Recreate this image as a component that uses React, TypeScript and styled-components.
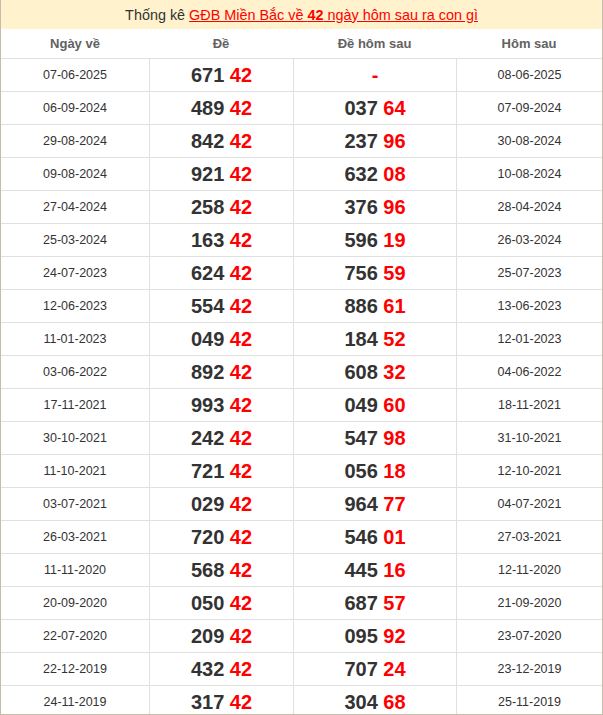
import styled, { createGlobalStyle } from "styled-components";

const GlobalStyle = createGlobalStyle`
  html, body {
    margin: 0;
    padding: 0;
    background: #fff;
  }
  body {
    font-family: "Liberation Sans", Arial, sans-serif;
  }
`;

const Frame = styled.div`
  width: 603px;
  height: 715px;
  box-sizing: border-box;
  border: 1px solid #c7bbab;
  border-top: none;
  overflow: hidden;
  background: #fff;
`;

const Title = styled.div`
  height: 29px;
  background: #fff2cc;
  display: flex;
  align-items: center;
  justify-content: center;
  font-size: 14.4px;
  color: #333;
`;

const TitleLink = styled.a`
  color: #f00;
  text-decoration: underline;
  margin-left: 4px;

  b {
    font-weight: 700;
  }
`;

const Row = styled.div<{ head?: boolean }>`
  display: grid;
  grid-template-columns: 148px 144px 163px 1fr;
  height: ${({ head }) => (head ? "29px" : "32px")};
  border-bottom: 1px solid #e0e0e0;
`;

const Cell = styled.div<{ head?: boolean }>`
  display: flex;
  align-items: center;
  justify-content: center;
  border-left: ${({ head }) => (head ? "none" : "1px solid #e0e0e0")};

  &:first-child {
    border-left: none;
  }
`;

const HeadText = styled.span`
  font-size: 13px;
  font-weight: 700;
  color: #626262;
`;

const DateText = styled.span`
  font-size: 12.5px;
  color: #333;
`;

const Num = styled.span`
  font-size: 20px;
  font-weight: 700;
  color: #333;
`;

const Red = styled.span`
  color: #f00;
`;

const rows: [string, string, string, string][] = [
  ["07-06-2025", "671 42", "-", "08-06-2025"],
  ["06-09-2024", "489 42", "037 64", "07-09-2024"],
  ["29-08-2024", "842 42", "237 96", "30-08-2024"],
  ["09-08-2024", "921 42", "632 08", "10-08-2024"],
  ["27-04-2024", "258 42", "376 96", "28-04-2024"],
  ["25-03-2024", "163 42", "596 19", "26-03-2024"],
  ["24-07-2023", "624 42", "756 59", "25-07-2023"],
  ["12-06-2023", "554 42", "886 61", "13-06-2023"],
  ["11-01-2023", "049 42", "184 52", "12-01-2023"],
  ["03-06-2022", "892 42", "608 32", "04-06-2022"],
  ["17-11-2021", "993 42", "049 60", "18-11-2021"],
  ["30-10-2021", "242 42", "547 98", "31-10-2021"],
  ["11-10-2021", "721 42", "056 18", "12-10-2021"],
  ["03-07-2021", "029 42", "964 77", "04-07-2021"],
  ["26-03-2021", "720 42", "546 01", "27-03-2021"],
  ["11-11-2020", "568 42", "445 16", "12-11-2020"],
  ["20-09-2020", "050 42", "687 57", "21-09-2020"],
  ["22-07-2020", "209 42", "095 92", "23-07-2020"],
  ["22-12-2019", "432 42", "707 24", "23-12-2019"],
  ["24-11-2019", "317 42", "304 68", "25-11-2019"],
];

const Number: React.FC<{ value: string }> = ({ value }) => {
  if (value === "-") {
    return (
      <Num>
        <Red>-</Red>
      </Num>
    );
  }
  const [head, tail] = value.split(" ");
  return (
    <Num>
      {head} <Red>{tail}</Red>
    </Num>
  );
};

const App: React.FC = () => {
  return (
    <>
      <GlobalStyle />
      <Frame>
        <Title>
          Thống kê
          <TitleLink>
            GĐB Miền Bắc về <b>42</b> ngày hôm sau ra con gì
          </TitleLink>
        </Title>
        <Row head>
          <Cell head>
            <HeadText>Ngày về</HeadText>
          </Cell>
          <Cell head>
            <HeadText>Đề</HeadText>
          </Cell>
          <Cell head>
            <HeadText>Đề hôm sau</HeadText>
          </Cell>
          <Cell head>
            <HeadText>Hôm sau</HeadText>
          </Cell>
        </Row>
        {rows.map(([day, num, next, nextDay]) => (
          <Row key={day + num}>
            <Cell>
              <DateText>{day}</DateText>
            </Cell>
            <Cell>
              <Number value={num} />
            </Cell>
            <Cell>
              <Number value={next} />
            </Cell>
            <Cell>
              <DateText>{nextDay}</DateText>
            </Cell>
          </Row>
        ))}
      </Frame>
    </>
  );
};

export default App;
